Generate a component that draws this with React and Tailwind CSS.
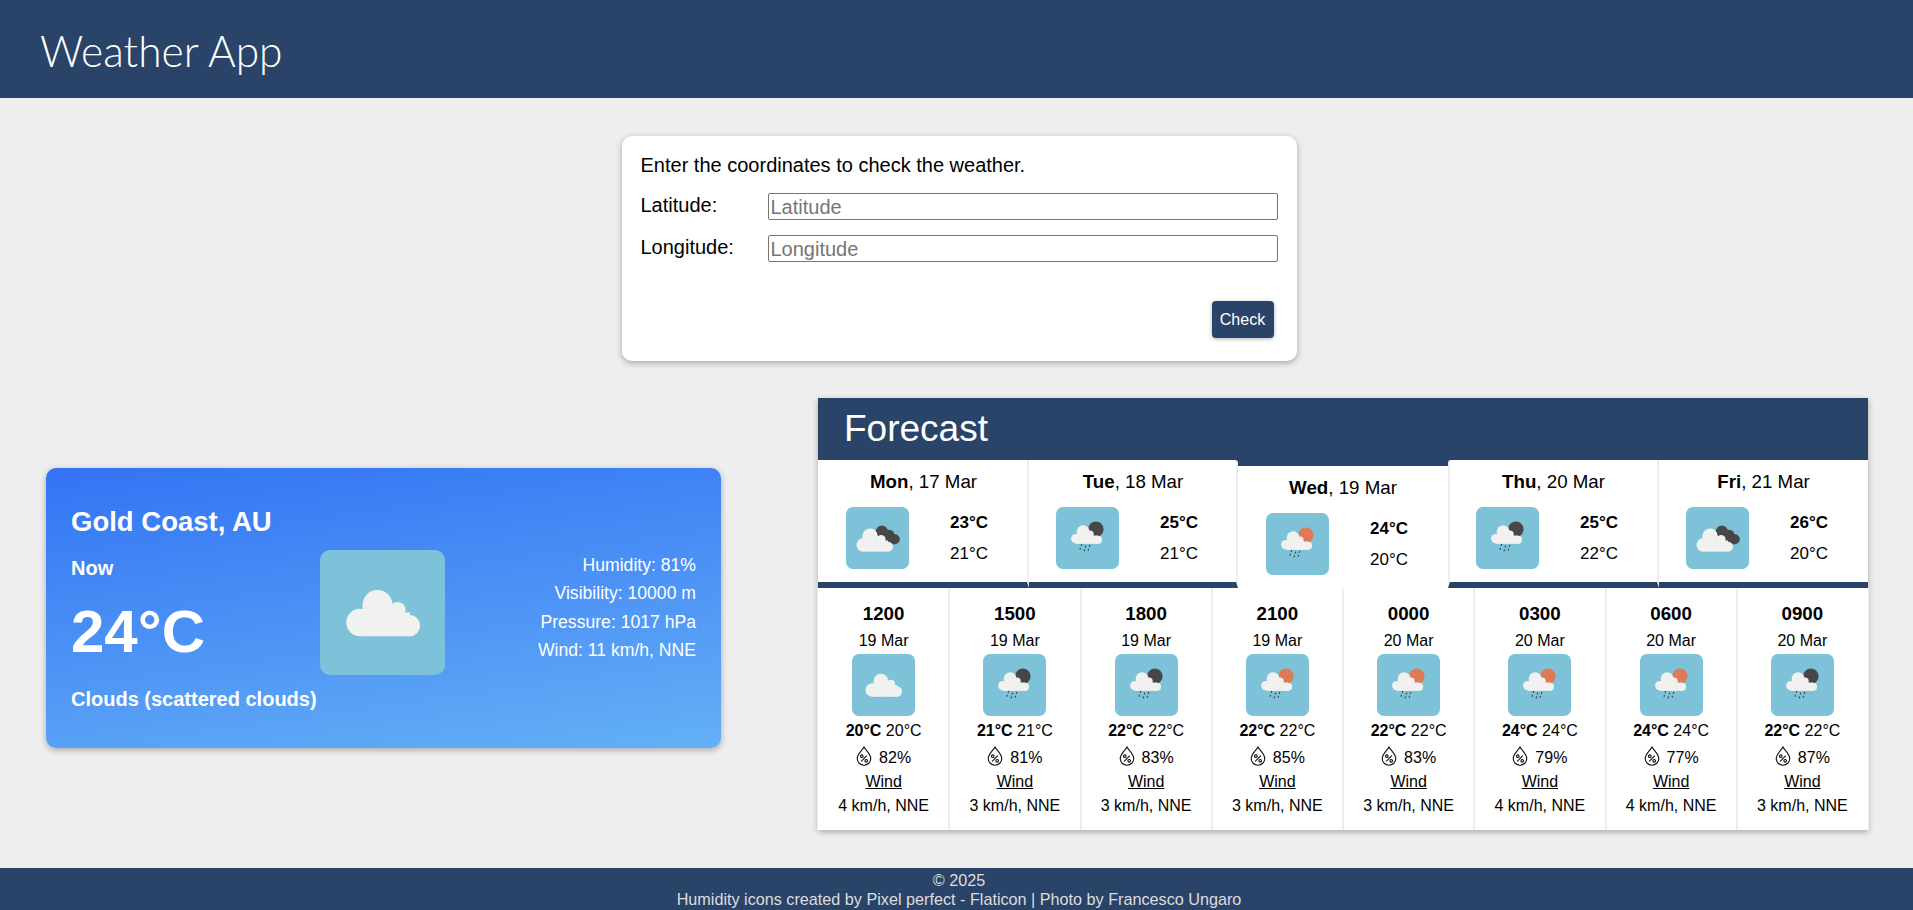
import React from 'react';

const days = [
  { day: 'Mon', date: '17 Mar', high: 23, low: 21, icon: 'broken', cell: 'w-[211px] border-r-2', text: 'pl-[2px]', tile: 'ml-[28px]' },
  { day: 'Tue', date: '18 Mar', high: 25, low: 21, icon: 'moon', cell: 'w-[209px] border-r-2 rounded-tr-[3px]', text: 'pl-[1px]', tile: 'ml-[27px]' },
  { day: 'Wed', date: '19 Mar', high: 24, low: 20, icon: 'sun', active: true, cell: 'w-[210px]', text: '', tile: 'ml-[28px]' },
  { day: 'Thu', date: '20 Mar', high: 25, low: 22, icon: 'moon', cell: 'w-[211px] border-x-2 rounded-tl-[3px]', text: '', tile: 'ml-[26px]' },
  { day: 'Fri', date: '21 Mar', high: 26, low: 20, icon: 'broken', cell: 'w-[209px]', text: '', tile: 'ml-[27px]' },
];

const hours = [
  { time: '1200', date: '19 Mar', temp: 20, humidity: 82, wind: 4, icon: 'cloud' },
  { time: '1500', date: '19 Mar', temp: 21, humidity: 81, wind: 3, icon: 'moon' },
  { time: '1800', date: '19 Mar', temp: 22, humidity: 83, wind: 3, icon: 'moon' },
  { time: '2100', date: '19 Mar', temp: 22, humidity: 85, wind: 3, icon: 'sun' },
  { time: '0000', date: '20 Mar', temp: 22, humidity: 83, wind: 3, icon: 'sun' },
  { time: '0300', date: '20 Mar', temp: 24, humidity: 79, wind: 4, icon: 'sun' },
  { time: '0600', date: '20 Mar', temp: 24, humidity: 77, wind: 4, icon: 'sun' },
  { time: '0900', date: '20 Mar', temp: 22, humidity: 87, wind: 3, icon: 'moon' },
];

const CLOUD = '#f1f1ef';
const DARK = '#47474a';

const RainCloud = ({ disc }) => (
  <>
    <circle cx="63.5" cy="36" r="12.5" fill={disc} />
    <g fill={CLOUD}>
      <circle cx="43" cy="40" r="10.5" />
      <circle cx="54" cy="44" r="6" />
      <circle cx="31" cy="51" r="7.5" />
      <circle cx="67" cy="53" r="6.5" />
      <rect x="31" y="46" width="36" height="13.5" />
    </g>
    <g stroke={DARK} strokeWidth="2" strokeLinecap="round" strokeDasharray="1.5 5">
      <path d="M40.5 60.5 L37 71" />
      <path d="M47 63 L44 73" />
      <path d="M53.5 62 L50.5 72" />
    </g>
  </>
);

const WeatherIcon = ({ kind }) => (
  <svg viewBox="0 0 100 100" className="w-full h-full">
    {kind === 'cloud' && (
      <g fill={CLOUD}>
        <circle cx="46" cy="44" r="12" />
        <circle cx="62" cy="48" r="6.5" />
        <circle cx="32" cy="58" r="11" />
        <circle cx="71.5" cy="60.5" r="8.5" />
        <rect x="32" y="50" width="40" height="19" />
      </g>
    )}
    {kind === 'broken' && (
      <>
        <g fill={DARK}>
          <circle cx="57" cy="40" r="10" />
          <circle cx="69" cy="45" r="8.5" />
          <circle cx="78" cy="52" r="8" />
          <rect x="56" y="44" width="22" height="16" />
        </g>
        <g fill={CLOUD}>
          <circle cx="38" cy="47" r="12.5" />
          <circle cx="56" cy="52" r="7" />
          <circle cx="27" cy="61" r="11" />
          <circle cx="67" cy="64" r="8" />
          <rect x="27" y="54" width="40" height="18" />
        </g>
      </>
    )}
    {kind === 'moon' && <RainCloud disc={DARK} />}
    {kind === 'sun' && <RainCloud disc="#e07a55" />}
  </svg>
);

const DropIcon = () => (
  <svg viewBox="0 0 16 20" className="w-4 h-5" fill="none" stroke="#111" strokeWidth="1.1">
    <path d="M8 1 C6.5 4 1.2 8 1.2 12.6 A6.8 6.6 0 0 0 14.8 12.6 C14.8 8 9.5 4 8 1 Z" />
    <path d="M10.8 9.6 L5.2 15.4" />
    <circle cx="5.8" cy="10.2" r="1.3" />
    <circle cx="10.2" cy="14.8" r="1.3" />
  </svg>
);

const Tile = ({ kind }) => (
  <div className="w-[63px] h-[62px] rounded-[7px] bg-[#7dc2d8] shrink-0">
    <WeatherIcon kind={kind} />
  </div>
);

const DayCard = ({ item }) => (
  <div
    className={`h-[128px] bg-white border-b-[6px] border-x-[#eeeeee] ${item.cell} ${
      item.active ? 'border-t-[6px] border-t-[#2a4469] border-b-white' : 'border-b-[#2a4469]'
    }`}
  >
    <h3 className={`text-[18.72px] leading-[22px] text-center pt-[11px] ${item.text}`}>
      <b>{item.day}</b>, {item.date}
    </h3>
    <div className={`flex mt-[14px] ${item.tile}`}>
      <Tile kind={item.icon} />
      <div className="ml-[41px] text-[17px] leading-[31px]">
        <div className="font-bold">{item.high}°C</div>
        <div>{item.low}°C</div>
      </div>
    </div>
  </div>
);

// separator sits on the column edge, so the contents stay centred on the full column
const HourCard = ({ item }) => (
  <div className="flex-1 flex flex-col items-center shadow-[1px_0_0_#eeeeee,-1px_0_0_#eeeeee] text-[16px] leading-[24px]">
    <div className="text-[18.72px] font-bold leading-[22px] mt-[15px]">{item.time}</div>
    <div className="mt-[4px] mb-[1px]">{item.date}</div>
    <Tile kind={item.icon} />
    <div className="mt-[3px]"><b>{item.temp}°C</b> {item.temp}°C</div>
    <div className="flex items-center gap-[7px] h-[26px]">
      <DropIcon />
      <span className="mt-[3px]">{item.humidity}%</span>
    </div>
    <div className="underline mt-[1px]">Wind</div>
    <div>{item.wind} km/h, NNE</div>
  </div>
);

export default function App() {
  return (
    <div className="min-h-screen flex flex-col bg-[#eeeeee] text-black overflow-hidden font-['Liberation_Sans',Arial,sans-serif]">
      <header className="h-[98px] bg-[#2a4469] flex items-center pl-[40px]">
        <h1 className="text-[42.5px] font-light text-white font-['Lato',sans-serif] pt-[3px]">Weather App</h1>
      </header>

      <div className="flex justify-center pl-[5px] mt-[38px]">
        <form className="w-[675px] h-[225px] bg-white rounded-[10px] shadow-[0_2px_6px_rgba(0,0,0,0.3)] pl-[19px] pr-[18px] pt-[17px]">
          <p className="text-[20px] leading-[24px]">Enter the coordinates to check the weather.</p>
          <div className="flex mt-[16px]">
            <label className="w-[127px] text-[20px] leading-[24px]">Latitude:</label>
            <input
              placeholder="Latitude"
              className="w-[510px] h-[27px] border border-[#767676] rounded-[2px] px-[2px] text-[20px] placeholder:text-[#757575]"
            />
          </div>
          <div className="flex mt-[15px]">
            <label className="w-[127px] text-[20px] leading-[24px]">Longitude:</label>
            <input
              placeholder="Longitude"
              className="w-[510px] h-[27px] border border-[#767676] rounded-[2px] px-[2px] text-[20px] placeholder:text-[#757575]"
            />
          </div>
          <div className="flex justify-end mt-[39px] pr-[5px]">
            <button type="button" className="w-[62px] h-[37px] bg-[#2a4469] text-white text-[16px] rounded-[4px] shadow-[0_1px_4px_rgba(0,0,0,0.3)]">
              Check
            </button>
          </div>
        </form>
      </div>

      <div className="flex items-start pl-[46px] mt-[37px]">
        <section className="w-[675px] h-[280px] mt-[70px] rounded-[10px] shadow-[0_2px_6px_rgba(0,0,0,0.3)] bg-[linear-gradient(172deg,#3373f4,#64b0f6)] text-white px-[25px] pt-[38px]">
          <h2 className="text-[27.5px] font-bold leading-[32px]">Gold Coast, AU</h2>
          <div className="flex mt-[12px]">
            <div className="w-[249px]">
              <div className="text-[20px] font-bold leading-[24px] mt-[6px]">Now</div>
              <div className="text-[60px] font-bold leading-[68px] mt-[18px]">24°C</div>
              <div className="text-[20px] font-bold leading-[24px] mt-[21px] whitespace-nowrap">Clouds (scattered clouds)</div>
            </div>
            <div className="w-[125px] h-[125px] rounded-[10px] bg-[#7dc2d8] shrink-0">
              <WeatherIcon kind="cloud" />
            </div>
            <div className="flex-1 text-right text-[17.6px] leading-[28.4px] pt-[1px]">
              <div>Humidity: 81%</div>
              <div>Visibility: 10000 m</div>
              <div>Pressure: 1017 hPa</div>
              <div>Wind: 11 km/h, NNE</div>
            </div>
          </div>
        </section>

        <section className="w-[1050px] h-[432px] ml-[97px] bg-white shadow-[0_2px_6px_rgba(0,0,0,0.3)]">
          <h2 className="h-[62px] bg-[#2a4469] text-white text-[37px] leading-[62px] pl-[26px]">Forecast</h2>
          <div className="flex bg-[#2a4469]">
            {days.map((item) => (
              <DayCard key={item.day} item={item} />
            ))}
          </div>
          <div className="flex h-[242px]">
            {hours.map((item) => (
              <HourCard key={item.time} item={item} />
            ))}
          </div>
        </section>
      </div>

      <footer className="mt-auto h-[42px] bg-[#2a4469] text-[#dddddd] text-[16.2px] leading-[19px] text-center pl-[5px] pt-[3px]">
        <div>© 2025</div>
        <div>Humidity icons created by Pixel perfect - Flaticon | Photo by Francesco Ungaro</div>
      </footer>
    </div>
  );
}
